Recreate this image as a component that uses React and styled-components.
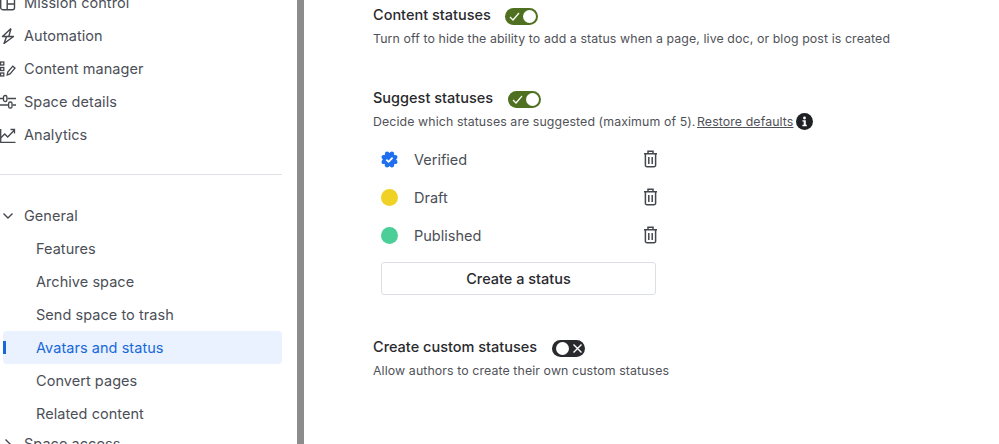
import React from 'react';
import styled, { createGlobalStyle } from 'styled-components';

const GlobalStyle = createGlobalStyle`
  html, body {
    margin: 0;
    height: 100%;
    overflow: hidden;
    background: #fff;
  }
  body {
    font-family: Inter, "Liberation Sans", sans-serif;
  }
`

const Page = styled.div`
  display: flex;
  width: 999px;
  height: 444px;
  overflow: hidden;
`
const Sidebar = styled.nav`
  flex: 0 0 297px;
  height: 444px;
  overflow: hidden;
  box-sizing: border-box;
  padding: 0 15px 0 3px;
`
const NavList = styled.div`
  display: flex;
  flex-direction: column;
  margin-top: -14px;
`
const NavRow = styled.div`
  display: flex;
  align-items: center;
  flex: 0 0 33px;
  height: 33px;
  border-radius: 4px;
  font-size: 14.5px;
  letter-spacing: 0.05px;
  color: ${p => (p.$active ? '#1868db' : '#4b4f57')};
  background: ${p => (p.$active ? '#e9f2fe' : 'transparent')};
  padding-left: ${p => (p.$sub ? '33px' : '0')};
  position: relative;
`
const LastNavRow = styled(NavRow)`
  margin-top: -3px;
`
const ActiveMark = styled.span`
  position: absolute;
  left: 0;
  top: 10px;
  width: 3px;
  height: 13px;
  background: #1868db;
`
const NavIcon = styled.span`
  display: flex;
  align-items: center;
  justify-content: center;
  width: 16px;
  height: 16px;
  margin-left: -3px;
  margin-right: 8px;
  color: #44474e;
`
const Divider = styled.div`
  height: 1px;
  background: #dfe1e6;
  margin: 23px 0 24px -3px;
`
const Gutter = styled.div`
  flex: 0 0 7px;
  height: 444px;
  background: #8c8c8c;
`
const Content = styled.main`
  flex: 1;
  box-sizing: border-box;
  padding: 4px 0 0 69px;
`
const Section = styled.section`
  display: flex;
  flex-direction: column;
  margin-bottom: ${p => p.$gap || 0}px;
`
const TitleRow = styled.div`
  display: flex;
  align-items: center;
  height: 20px;
`
const Title = styled.h3`
  margin: 0;
  font-size: 14.5px;
  font-weight: 450;
  color: #292a2e;
`
const Description = styled.p`
  display: flex;
  align-items: center;
  margin: 5px 0 0;
  height: 18px;
  font-size: 12.35px;
  letter-spacing: 0.1px;
  color: #505258;
`
const RestoreLink = styled.span`
  margin-left: 1.5px;
  text-decoration: underline;
  color: #505258;
`
const InfoBadge = styled.span`
  display: flex;
  margin-left: 3px;
`
const Toggle = styled.span`
  display: flex;
  align-items: center;
  justify-content: space-between;
  box-sizing: border-box;
  width: 33px;
  height: 17px;
  margin: 5px 0 0 ${p => p.$offset}px;
  padding: 0 2px 0 4px;
  border-radius: 9px;
  background: ${p => (p.$on ? '#4f7020' : '#292a2e')};
  flex-direction: ${p => (p.$on ? 'row' : 'row-reverse')};
`
const Knob = styled.span`
  width: 13px;
  height: 13px;
  border-radius: 50%;
  background: #fff;
`
const StatusList = styled.div`
  display: flex;
  flex-direction: column;
  margin: 10px 0 0 8px;
  width: 275px;
`
const StatusRow = styled.div`
  display: flex;
  align-items: center;
  height: 38px;
  font-size: 14.5px;
  color: #4b4f57;
`
const StatusLabel = styled.span`
  flex: none;
  margin-left: 16px;
  width: 229px;
`
const StatusMark = styled.span`
  display: flex;
  flex: none;
  width: 17px;
  height: 17px;
`
const Dot = styled.span`
  width: 17px;
  height: 17px;
  border-radius: 50%;
  background: ${p => p.$color};
`
const TrashButton = styled.span`
  display: flex;
  flex: none;
  color: #44474e;
`
const CreateButton = styled.button`
  width: 275px;
  height: 33px;
  margin-top: 8px;
  border: 1px solid #dcdfe4;
  border-radius: 3px;
  background: #fff;
  font-family: inherit;
  font-size: 14.5px;
  font-weight: 450;
  color: #292a2e;
`

const Chevron = () => (
  <svg width="12" height="12" viewBox="0 0 12 12" fill="none" stroke="#44474e" strokeWidth="1.4">
    <path d="M1.5 3.5l4.5 4.5 4.5-4.5" />
  </svg>
)
const ChevronRight = () => (
  <svg width="12" height="12" viewBox="0 0 12 12" fill="none" stroke="#44474e" strokeWidth="1.4">
    <path d="M3.5 1.5l4.5 4.5-4.5 4.5" />
  </svg>
)
const MissionIcon = () => (
  <svg width="16" height="16" viewBox="0 0 16 16" fill="none" stroke="currentColor" strokeWidth="1.4">
    <rect x="0.7" y="0.7" width="13.8" height="14" rx="2" />
    <path d="M7.2 0.7v14M7.2 9h7.3" />
  </svg>
)
const BoltIcon = () => (
  <svg width="16" height="16" viewBox="0 0 16 16" fill="none" stroke="currentColor" strokeWidth="1.4" strokeLinejoin="round">
    <path d="M11 0.5L2.5 8.5h11L4 15.5l2.6-7M11 0.5L8.8 8.5" />
  </svg>
)
const ContentIcon = () => (
  <svg width="16" height="16" viewBox="0 0 16 16" fill="none" stroke="currentColor" strokeWidth="1.3">
    <rect x="0.6" y="1" width="3.2" height="3" />
    <rect x="0.6" y="6.5" width="3.2" height="3" />
    <rect x="0.6" y="12" width="3.2" height="3" />
    <path d="M7.2 14l.6-3 5-5.8 2.2 1.9-5 5.8z" />
  </svg>
)
const SlidersIcon = () => (
  <svg width="16" height="16" viewBox="0 0 16 16" fill="none" stroke="currentColor" strokeWidth="1.3">
    <path d="M0 4.5h3M7.5 4.5H16M0 11h8M12.5 11H16" />
    <rect x="3.5" y="1.5" width="3.4" height="6" rx="1.6" />
    <rect x="8.6" y="8" width="3.4" height="6" rx="1.6" />
  </svg>
)
const ChartIcon = () => (
  <svg width="16" height="16" viewBox="0 0 16 16" fill="none" stroke="currentColor" strokeWidth="1.3">
    <path d="M0.7 2v13.3H15.5" />
    <path d="M0.7 11l4-4 3 3 6.3-6.5M10.5 2.5h4v4" />
  </svg>
)
const lobes = [0, 45, 90, 135, 180, 225, 270, 315]
const VerifiedIcon = () => (
  <svg width="17" height="17" viewBox="0 0 17 17">
    <g fill="#1f6fef">
      <circle cx="8.5" cy="8.5" r="6.8" />
      {lobes.map(angle => (
        <circle
          key={angle}
          cx={8.5 + 6.3 * Math.cos((angle + 22.5) * Math.PI / 180)}
          cy={8.5 + 6.3 * Math.sin((angle + 22.5) * Math.PI / 180)}
          r="2.2"
        />
      ))}
    </g>
    <path fill="none" stroke="#fff" strokeWidth="1.8" d="M5.3 8.6l2.3 2.2 4-4.2" />
  </svg>
)
const TrashIcon = () => (
  <svg width="15" height="18" viewBox="0 0 15 18" fill="none" stroke="currentColor" strokeWidth="1.5">
    <path d="M1 3.8h13M5 3.5V1.2h5v2.3M2.4 4v11.2a1.6 1.6 0 0 0 1.6 1.6h7a1.6 1.6 0 0 0 1.6-1.6V4M5.8 7v7M9.2 7v7" />
  </svg>
)
const InfoIcon = () => (
  <svg width="17" height="17" viewBox="0 0 17 17">
    <circle cx="8.5" cy="8.5" r="8.5" fill="#1f2024" />
    <path fill="#fff" d="M6.4 7.2h3.4v4.6h1v1.4H6.4v-1.4h1.3V8.6H6.4z" />
    <circle cx="8.5" cy="5" r="1.4" fill="#fff" />
  </svg>
)
const CheckGlyph = () => (
  <svg width="11" height="11" viewBox="0 0 11 11" fill="none" stroke="#fff" strokeWidth="1.2">
    <path d="M1 6l3 3 6-7" />
  </svg>
)
const CrossGlyph = () => (
  <svg width="11" height="11" viewBox="0 0 11 11" fill="none" stroke="#fff" strokeWidth="1.4">
    <path d="M1.5 1.5l8 8M9.5 1.5l-8 8" />
  </svg>
)

const topItems = [
  { label: 'Mission control', icon: <MissionIcon /> },
  { label: 'Automation', icon: <BoltIcon /> },
  { label: 'Content manager', icon: <ContentIcon /> },
  { label: 'Space details', icon: <SlidersIcon /> },
  { label: 'Analytics', icon: <ChartIcon /> },
]
const generalItems = ['Features', 'Archive space', 'Send space to trash', 'Avatars and status', 'Convert pages', 'Related content']
const statuses = [
  { label: 'Verified', icon: <VerifiedIcon /> },
  { label: 'Draft', icon: <Dot $color="#f0d126" /> },
  { label: 'Published', icon: <Dot $color="#4bce97" /> },
]

export default function App() {
  return (
    <Page>
      <GlobalStyle />
      <Sidebar>
        <NavList>
          {topItems.map(item => (
            <NavRow key={item.label}>
              <NavIcon>{item.icon}</NavIcon>
              {item.label}
            </NavRow>
          ))}
          <Divider />
          <NavRow>
            <NavIcon><Chevron /></NavIcon>
            General
          </NavRow>
          {generalItems.map(label => (
            <NavRow key={label} $sub $active={label === 'Avatars and status'}>
              {label === 'Avatars and status' && <ActiveMark />}
              {label}
            </NavRow>
          ))}
          <LastNavRow>
            <NavIcon><ChevronRight /></NavIcon>
            Space access
          </LastNavRow>
        </NavList>
      </Sidebar>
      <Gutter />
      <Content>
        <Section $gap={40}>
          <TitleRow>
            <Title>Content statuses</Title>
            <Toggle $on $offset={14}><CheckGlyph /><Knob /></Toggle>
          </TitleRow>
          <Description>Turn off to hide the ability to add a status when a page, live doc, or blog post is created</Description>
        </Section>
        <Section $gap={41}>
          <TitleRow>
            <Title>Suggest statuses</Title>
            <Toggle $on $offset={15}><CheckGlyph /><Knob /></Toggle>
          </TitleRow>
          <Description>
            Decide which statuses are suggested (maximum of 5).
            <RestoreLink>Restore defaults</RestoreLink>
            <InfoBadge><InfoIcon /></InfoBadge>
          </Description>
          <StatusList>
            {statuses.map(status => (
              <StatusRow key={status.label}>
                <StatusMark>{status.icon}</StatusMark>
                <StatusLabel>{status.label}</StatusLabel>
                <TrashButton><TrashIcon /></TrashButton>
              </StatusRow>
            ))}
            <CreateButton>Create a status</CreateButton>
          </StatusList>
        </Section>
        <Section>
          <TitleRow>
            <Title>Create custom statuses</Title>
            <Toggle $offset={15}><CrossGlyph /><Knob /></Toggle>
          </TitleRow>
          <Description>Allow authors to create their own custom statuses</Description>
        </Section>
      </Content>
    </Page>
  )
}
